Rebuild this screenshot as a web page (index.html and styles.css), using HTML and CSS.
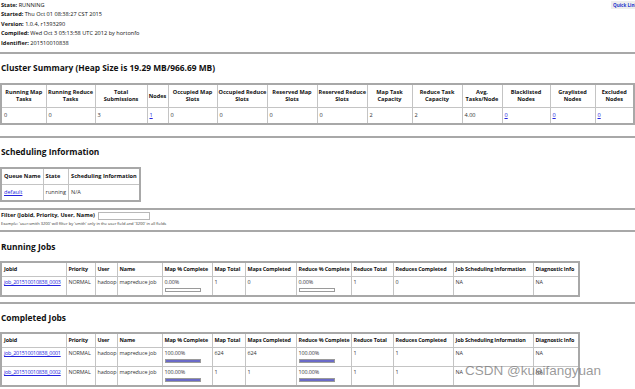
FILE: index.html
```html
<!DOCTYPE html>
<html>
<head>
<meta charset="utf-8">
<title>JobTracker</title>
<link rel="stylesheet" href="styles.css">
</head>
<body>
<div class="quick">Quick Links</div>
<div class="info">
  <div><b>State:</b> RUNNING</div>
  <div><b>Started:</b> Thu Oct 01 08:38:27 CST 2015</div>
  <div><b>Version:</b> 1.0.4, r1393290</div>
  <div><b>Compiled:</b> Wed Oct 3 05:13:58 UTC 2012 by hortonfo</div>
  <div><b>Identifier:</b> 201510010838</div>
</div>
<hr class="rule">
<h2 class="title">Cluster Summary (Heap Size is 19.29 MB/966.69 MB)</h2>
<table class="grid cluster">
  <tr>
    <th>Running Map<br>Tasks</th><th>Running Reduce<br>Tasks</th><th>Total<br>Submissions</th><th>Nodes</th><th>Occupied Map<br>Slots</th><th>Occupied Reduce<br>Slots</th><th>Reserved Map<br>Slots</th><th>Reserved Reduce<br>Slots</th><th>Map Task<br>Capacity</th><th>Reduce Task<br>Capacity</th><th>Avg.<br>Tasks/Node</th><th>Blacklisted<br>Nodes</th><th>Graylisted<br>Nodes</th><th>Excluded<br>Nodes</th>
  </tr>
  <tr>
    <td>0</td><td>0</td><td>3</td><td><a href="#">1</a></td><td>0</td><td>0</td><td>0</td><td>0</td><td>2</td><td>2</td><td>4.00</td><td><a href="#">0</a></td><td><a href="#">0</a></td><td><a href="#">0</a></td>
  </tr>
</table>
<hr class="rule rule-wide">
<h2 class="title">Scheduling Information</h2>
<table class="grid sched">
  <tr><th>Queue Name</th><th>State</th><th>Scheduling Information</th></tr>
  <tr><td><a href="#">default</a></td><td>running</td><td>N/A</td></tr>
</table>
<hr class="rule">
<div class="filter"><b>Filter (Jobid, Priority, User, Name)</b><span class="input"></span></div>
<div class="example">Example: 'user:smith 3200' will filter by 'smith' only in the user field and '3200' in all fields</div>
<hr class="rule rule-short">
<h2 class="title">Running Jobs</h2>
<table class="grid jobs">
  <tr><th>Jobid</th><th>Priority</th><th>User</th><th>Name</th><th>Map % Complete</th><th>Map Total</th><th>Maps Completed</th><th>Reduce % Complete</th><th>Reduce Total</th><th>Reduces Completed</th><th>Job Scheduling Information</th><th>Diagnostic Info</th></tr>
  <tr><td><a href="#">job_201510010838_0003</a></td><td>NORMAL</td><td>hadoop</td><td>mapreduce job</td><td>0.00%<div class="bar"><div class="fill" style="width:0%"></div></div></td><td>1</td><td>0</td><td>0.00%<div class="bar"><div class="fill" style="width:0%"></div></div></td><td>1</td><td>0</td><td>NA</td><td>NA</td></tr>
</table>
<hr class="rule rule-jobs">
<h2 class="title">Completed Jobs</h2>
<table class="grid jobs">
  <tr><th>Jobid</th><th>Priority</th><th>User</th><th>Name</th><th>Map % Complete</th><th>Map Total</th><th>Maps Completed</th><th>Reduce % Complete</th><th>Reduce Total</th><th>Reduces Completed</th><th>Job Scheduling Information</th><th>Diagnostic Info</th></tr>
  <tr><td><a href="#">job_201510010838_0001</a></td><td>NORMAL</td><td>hadoop</td><td>mapreduce job</td><td>100.00%<div class="bar"><div class="fill" style="width:100%"></div></div></td><td>624</td><td>624</td><td>100.00%<div class="bar"><div class="fill" style="width:100%"></div></div></td><td>1</td><td>1</td><td>NA</td><td>NA</td></tr>
  <tr><td><a href="#">job_201510010838_0002</a></td><td>NORMAL</td><td>hadoop</td><td>mapreduce job</td><td>100.00%<div class="bar"><div class="fill" style="width:100%"></div></div></td><td>1</td><td>1</td><td>100.00%<div class="bar"><div class="fill" style="width:100%"></div></div></td><td>1</td><td>1</td><td>NA</td><td>NA</td></tr>
</table>
<div class="watermark">CSDN @kuaifangyuan</div>
</body>
</html>
```

FILE: styles.css
```css
html, body {
  margin: 0;
  padding: 0;
  background: #ffffff;
  overflow: hidden;
}
body {
  width: 635px;
  height: 389px;
  position: relative;
  font-family: "Open Sans", "Noto Sans", sans-serif;
  font-size: 5.6px;
  color: #111;
  padding-left: 1px;
  box-sizing: border-box;
}
a { color: #2222dd; text-decoration: underline; }

.quick {
  position: absolute;
  left: 611px;
  top: 1px;
  padding: 1px 2px;
  background: #eeeeee;
  color: #2233cc;
  font-weight: bold;
  font-size: 4.6px;
  white-space: nowrap;
}

.info {
  padding-top: 1px;
  line-height: 9.4px;
  font-size: 5.6px;
}

.rule {
  margin: 6px 0 0 -1px;
  border: 0;
  height: 2px;
  background: #a8a8a8;
  width: 635px;
}
.info + .rule { margin-top: 4px; }
.rule-wide { margin-top: 11px; }
.rule-short { margin-top: 3px; }
.rule-jobs { margin-top: 5px; }

.title {
  margin: 8px 0 9px 0;
  font-size: 8.4px;
  line-height: 12px;
  font-weight: bold;
  color: #111;
}
.rule-short + .title { margin-top: 9px; margin-bottom: 8px; }
.rule-jobs + .title { margin-bottom: 8px; }

.grid {
  border-collapse: collapse;
  border: 2px solid #a8a8a8;
  margin-left: -1px;
  font-size: 5.6px;
  line-height: 7px;
}
.grid th, .grid td {
  box-sizing: border-box;
  border: 1px solid #c4c4c4;
  padding: 2px 2px;
  text-align: left;
  vertical-align: middle;
  white-space: nowrap;
}
.grid th {
  font-weight: bold;
}
.grid td { color: #333; }

.cluster {
  width: 633px;
  table-layout: fixed;
}
.cluster th { text-align: center; padding: 4px 1px; }
.cluster td { padding: 4px 2px; }
.cluster th:nth-child(1) { width: 45px; }
.cluster th:nth-child(2) { width: 49px; }
.cluster th:nth-child(3) { width: 52px; }
.cluster th:nth-child(4) { width: 21px; }
.cluster th:nth-child(5) { width: 49px; }
.cluster th:nth-child(6) { width: 50px; }
.cluster th:nth-child(7) { width: 50px; }
.cluster th:nth-child(8) { width: 50px; }
.cluster th:nth-child(9) { width: 45px; }
.cluster th:nth-child(10) { width: 50px; }
.cluster th:nth-child(11) { width: 40px; }
.cluster th:nth-child(12) { width: 48px; }
.cluster th:nth-child(13) { width: 45px; }
.cluster th:nth-child(14) { width: 39px; }

.sched th { padding: 4px 2px; }
.sched td { padding: 4px 2px 4px 2px; }

.filter {
  margin-top: 1px;
  font-size: 5.6px;
  line-height: 9px;
  display: flex;
  align-items: center;
  gap: 3px;
}
.input {
  flex: none;
  display: block;
  width: 50px;
  height: 6px;
  border: 1px solid #b8b8b8;
  background: #fff;
}
.example {
  margin-top: 1px;
  font-size: 4px;
  line-height: 6px;
  color: #333;
}

.jobs {
  table-layout: fixed;
  width: 578px;
  font-size: 5.4px;
}
.jobs th { padding: 3px 1px 3px 2px; letter-spacing: -0.12px; }
.jobs td { vertical-align: top; padding: 2px 1px 3px 2px; letter-spacing: -0.08px; }
.jobs td:first-child a { letter-spacing: -0.25px; }
.jobs th:nth-child(1) { width: 65px; }
.jobs th:nth-child(2) { width: 29px; }
.jobs th:nth-child(3) { width: 22px; }
.jobs th:nth-child(4) { width: 45px; }
.jobs th:nth-child(5) { width: 50px; }
.jobs th:nth-child(6) { width: 33px; }
.jobs th:nth-child(7) { width: 51px; }
.jobs th:nth-child(8) { width: 55px; }
.jobs th:nth-child(9) { width: 42px; }
.jobs th:nth-child(10) { width: 60px; }
.jobs th:nth-child(11) { width: 80px; }
.jobs th:nth-child(12) { width: 46px; }

.bar {
  margin-top: 2px;
  width: 34px;
  height: 2px;
  border: 1px solid #9a9a9a;
  background: #fff;
}
.fill {
  height: 100%;
  background: #6a6ac8;
}

.watermark {
  position: absolute;
  left: 465px;
  top: 363px;
  font-family: "Liberation Sans", Arial, sans-serif;
  font-size: 13.5px;
  color: rgba(120, 120, 120, 0.75);
  white-space: nowrap;
}
```
